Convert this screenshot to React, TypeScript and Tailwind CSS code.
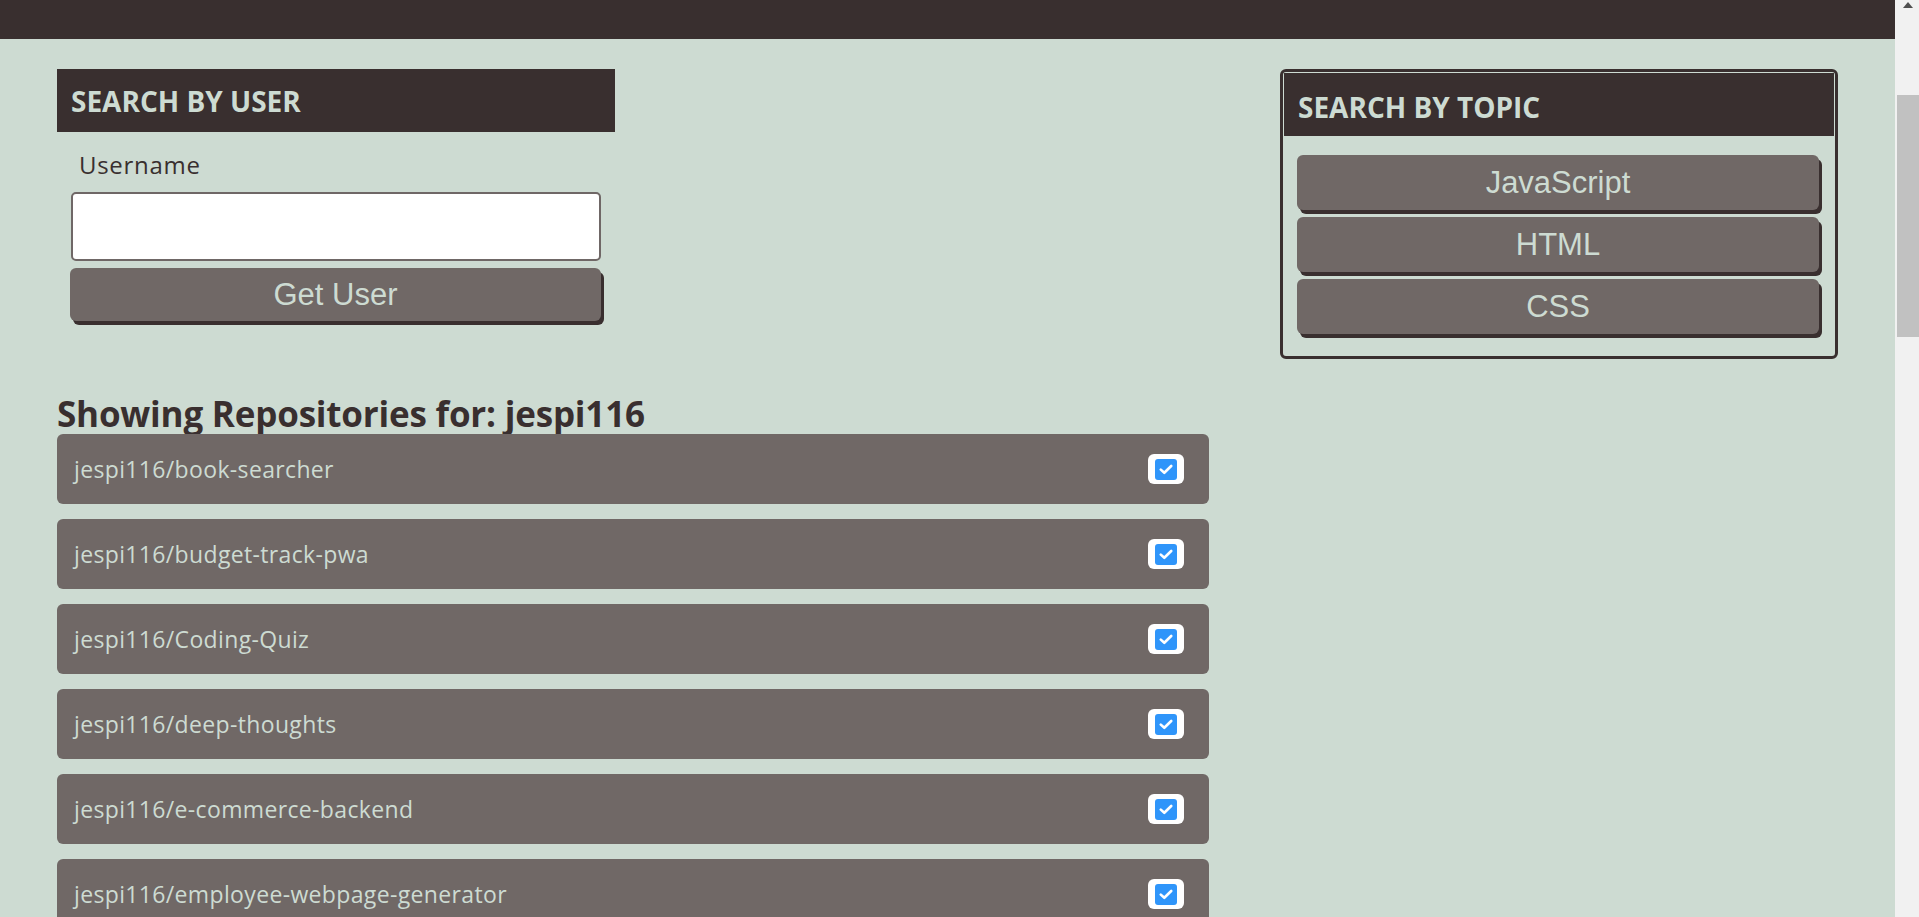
import React from "react";

const repos = [
  "jespi116/book-searcher",
  "jespi116/budget-track-pwa",
  "jespi116/Coding-Quiz",
  "jespi116/deep-thoughts",
  "jespi116/e-commerce-backend",
  "jespi116/employee-webpage-generator",
];

function Check() {
  return (
    <div className="w-[36px] h-[30px] bg-white rounded-[6px] flex items-center justify-center shrink-0">
      <div className="w-[22px] h-[21px] bg-[#2f95fa] rounded-[3px] flex items-center justify-center">
        <svg width="14" height="11" viewBox="0 0 14 11" fill="none">
          <path d="M1.8 5.6 L5.3 8.8 L12.2 2" stroke="white" strokeWidth="2.6" strokeLinecap="round" strokeLinejoin="round" />
        </svg>
      </div>
    </div>
  );
}

function Btn({ label, cls }: { label: string; cls: string }) {
  return (
    <button
      className={`${cls} bg-[#706866] rounded-[6px] shadow-[3px_4px_0_#392f2f] text-[#cddbd2] text-[31px] font-['Liberation_Sans',Arial,sans-serif] flex items-center justify-center leading-none`}
    >
      {label}
    </button>
  );
}

export default function App() {
  return (
    <div className="h-[917px] w-[1919px] overflow-hidden flex bg-[#cddbd2] font-['Open_Sans',sans-serif]">
      <div className="flex-1 flex flex-col">
        <div className="h-[39px] bg-[#392f2f] shrink-0" />
        <div className="px-[57px] pt-[30px] flex justify-between">
          <div className="w-[1152px] flex flex-col">
            <div className="w-[558px]">
              <div className="h-[63px] bg-[#392f2f] flex items-center px-[14px]">
                <h2 className="text-[28px] font-bold text-[#cddbd2] leading-none pt-[1px]">SEARCH BY USER</h2>
              </div>
              <div className="pl-[22px] pt-[20px] text-[24px] text-[#392f2f] leading-[26px] tracking-[0.7px]">Username</div>
              <div className="pl-[14px] pt-[14px]">
                <div className="w-[530px] h-[69px] bg-white border-2 border-[#6f6766] rounded-[5px]" />
              </div>
              <div className="pl-[13px] pt-[7px]">
                <Btn label="Get User" cls="w-[531px] h-[53px]" />
              </div>
            </div>
            <h1 className="mt-[74px] text-[35px] font-bold text-[#392f2f] leading-[38px] tracking-[-0.2px]">
              Showing Repositories for: jespi116
            </h1>
            <div className="flex flex-col gap-[15px] mt-[1px]">
              {repos.map((r) => (
                <div
                  key={r}
                  className="h-[70px] shrink-0 bg-[#706866] rounded-[6px] flex items-center justify-between pl-[17px] pr-[25px]"
                >
                  <span className="text-[23px] text-[#cddbd2] tracking-[0.35px]">{r}</span>
                  <Check />
                </div>
              ))}
            </div>
          </div>
          <div className="w-[558px]">
            <div className="h-[290px] border-[3px] border-[#392f2f] rounded-[6px] p-px flex flex-col">
              <div className="h-[63px] bg-[#392f2f] flex items-center px-[14px]">
                <h2 className="text-[28px] font-bold text-[#cddbd2] leading-none pt-[4px]">SEARCH BY TOPIC</h2>
              </div>
              <div className="flex flex-col gap-[7px] pl-[13px] pt-[19px]">
                <Btn label="JavaScript" cls="w-[522px] h-[55px]" />
                <Btn label="HTML" cls="w-[522px] h-[55px]" />
                <Btn label="CSS" cls="w-[522px] h-[55px]" />
              </div>
            </div>
          </div>
        </div>
      </div>
      <div className="w-[24px] h-full bg-[#f1f1f1] flex flex-col items-center shrink-0">
        <svg width="12" height="8" viewBox="0 0 12 8" className="mt-[1px] ml-[2px]">
          <polygon points="6,1 11,7 1,7" fill="#505050" />
        </svg>
        <div className="mt-[86px] ml-[2px] w-[22px] h-[242px] bg-[#c1c1c1]" />
      </div>
    </div>
  );
}
